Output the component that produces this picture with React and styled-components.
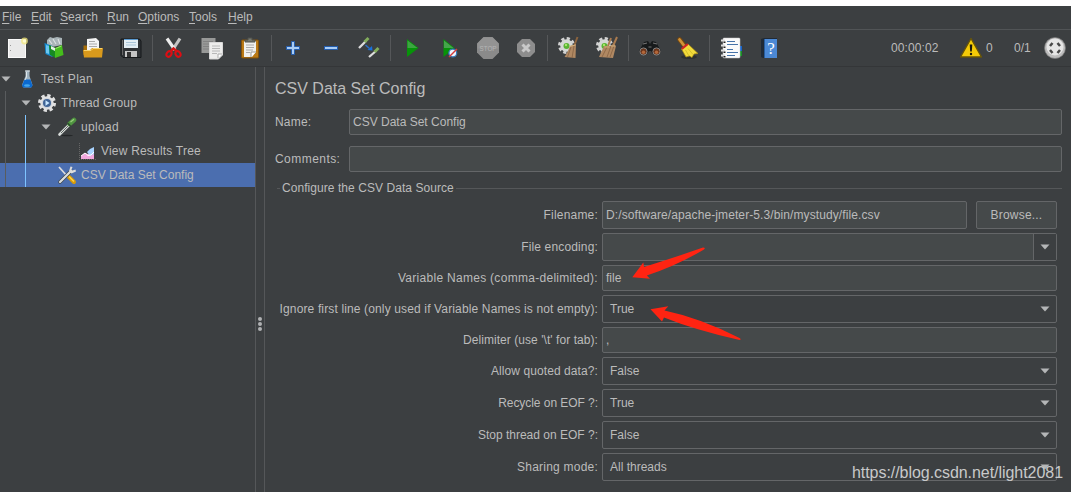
import styled, { createGlobalStyle } from "styled-components";

const GlobalStyle = createGlobalStyle`
    * {
        box-sizing: border-box;
    }

    body {
        margin: 0;
        background: #fff;
        color: #bbbbbb;
        font-family: "Liberation Sans", Arial, sans-serif;
        font-size: 12px;
        overflow: hidden;
    }
`;

const menus = [
    { label: 'File', width: 29 },
    { label: 'Edit', width: 29 },
    { label: 'Search', width: 47 },
    { label: 'Run', width: 31 },
    { label: 'Options', width: 51 },
    { label: 'Tools', width: 39 },
    { label: 'Help', width: 30 }
];

const Icon = ({ children, size = 24 }) => (
    <svg width={size} height={size} viewBox={`0 0 ${size} ${size}`} fill="none">{children}</svg>
);

const NewIcon = () => (
    <Icon>
        <rect x="3.5" y="3.5" width="17" height="18" fill="#e9e9e9" stroke="#fafafa" />
        <path d="M5.5 9v1M5.5 14v1" stroke="#999" />
        <circle cx="19.5" cy="5" r="3.4" fill="#f3e87c" opacity=".75" />
        <circle cx="19.5" cy="5" r="1.8" fill="#fffbd0" />
    </Icon>
);

const TemplatesIcon = () => (
    <Icon>
        <path d="M4 4l3-3 3 1 4-1 5 1v7L4 12z" fill="#a9b4b8" />
        <path d="M6 4l3 4M10 3l3 5M15 3l2 5" stroke="#dde2e3" strokeWidth="1.1" />
        <path d="M1.500 7l8 3v11l-7-3z" fill="#168bd0" />
        <path d="M3 9l3 1v8l-3-1z" fill="#6dc6ef" />
        <path d="M6 9l7 3v10l-6-3z" fill="#178a22" />
        <path d="M12 12l7-3 1.500 10-8.500 3z" fill="#45bd1c" />
        <path d="M12.500 12.500l6-2.500" stroke="#9be86e" />
        <path d="M8 10l4 2v3l-4-2z" fill="#e4efe4" />
    </Icon>
);

const OpenIcon = () => (
    <Icon>
        <path d="M2.500 19V9.500h5V14h13v5z" fill="#a66d08" />
        <path d="M6 3l9-1 3 3v10H6z" fill="#f4f4f4" />
        <path d="M8 5.500h6M8 8h8M8 10.500h8" stroke="#aaa" />
        <path d="M2 14h7l2-2h11l-1 9.500H3z" fill="#d99a1c" />
        <path d="M3 14.500h7l2-2h9" stroke="#f9d46c" />
    </Icon>
);

const SaveIcon = () => (
    <Icon>
        <path d="M2.500 3h18l1.500 2v16.500H4l-2-2V3z" fill="#303336" stroke="#15181a" />
        <rect x="5" y="3" width="14" height="9" fill="#e4eef4" />
        <path d="M5 3.500h14" stroke="#5c9bd0" />
        <path d="M7 6.500h10M7 9h10" stroke="#a9c5d9" />
        <rect x="6" y="15" width="12" height="6" fill="#c5c5c5" />
        <rect x="8" y="16" width="4" height="5" fill="#333" />
        <path d="M3.500 4v15" stroke="#666" />
    </Icon>
);

const CutIcon = () => (
    <Icon>
        <path d="M18 2.500L10.500 14" stroke="#c4c4c4" strokeWidth="3.200" />
        <path d="M5 2.500L13 14" stroke="#ededed" strokeWidth="3.200" />
        <path d="M9 15l2.500-2.500L14.500 15" stroke="#d31515" strokeWidth="2.500" />
        <ellipse cx="7" cy="18" rx="2.300" ry="3" transform="rotate(35 7 18)" stroke="#e00d13" strokeWidth="2" />
        <ellipse cx="16" cy="18" rx="2.300" ry="3" transform="rotate(-35 16 18)" stroke="#e00d13" strokeWidth="2" />
    </Icon>
);

const CopyIcon = () => (
    <Icon>
        <path d="M1.500 2h14v15h-14z" fill="#989998" />
        <path d="M3 5.500h10M3 8h6M3 10.500h6M3 13h6" stroke="#828282" />
        <path d="M9.500 6.500h13V19l-4 4h-9z" fill="#ededec" stroke="#d8d8d8" />
        <path d="M12 10h8M12 12.500h8M12 15h8M12 17.500h5" stroke="#b8b8b8" />
        <path d="M18 22v-4h4" fill="#fff" stroke="#aaa" />
    </Icon>
);

const PasteIcon = () => (
    <Icon>
        <rect x="3.500" y="4" width="17" height="18" rx="1" fill="#b97916" stroke="#80500b" />
        <path d="M6 5h12v11l-4 5H6z" fill="#f0f0ee" />
        <path d="M8 9h8M8 11.500h8M8 14h7M8 16.500h4" stroke="#aaa" />
        <path d="M7 6V4h3V2h4v2h3v2z" fill="#777970" stroke="#4f514b" />
        <path d="M13 21v-5h5" fill="#fff" stroke="#999" />
    </Icon>
);

const PlusIcon = () => (
    <Icon>
        <path d="M10.500 5.500h3v5h5v3h-5v5h-3v-5h-5v-3h5z" fill="#a9cdf6" stroke="#245dad" />
    </Icon>
);

const MinusIcon = () => (
    <Icon>
        <rect x="5.500" y="10.500" width="13" height="3" fill="#a9cdf6" stroke="#245dad" />
    </Icon>
);

const ToggleIcon = () => (
    <Icon>
        <path d="M2 12l7-7" stroke="#ddd" strokeWidth="2.300" />
        <path d="M7.500 6l4-4" stroke="#83ad5c" strokeWidth="3" />
        <path d="M12 21l7-6" stroke="#ddd" strokeWidth="2.300" />
        <path d="M17.500 16l4-4" stroke="#83ad5c" strokeWidth="3" />
        <path d="M8.500 9l4 3.500" stroke="#2d6fc4" strokeWidth="1.500" />
        <path d="M15.500 14.500l-5-.500 4.500-4z" fill="#1970dd" />
    </Icon>
);

const PlayIcon = () => (
    <Icon>
        <path d="M7 3l11.500 9L7 21z" fill="#079309" />
        <path d="M7.500 4.500l10 7.500h-10z" fill="#3da542" />
    </Icon>
);

const PlayNoPauseIcon = () => (
    <Icon>
        <path d="M5.500 3L16.500 12l-11 9z" fill="#079309" />
        <path d="M6 4.500L15.500 12H6z" fill="#45a54b" />
        <circle cx="14.800" cy="17" r="3.900" fill="#eef6ff" stroke="#3678b5" strokeWidth="1.300" />
        <path d="M11 21l8-8" stroke="#d43b39" strokeWidth="1.500" />
    </Icon>
);

const StopIcon = () => (
    <Icon>
        <path d="M7.500 1h9L23 7.500v9L16.500 23h-9L1 16.500v-9z" fill="#8a8a8a" />
        <path d="M7.500 1.500h9l6 6v5h-21v-5z" fill="#939393" />
        <text x="3.500" y="15" fontSize="8" textLength="17" lengthAdjust="spacingAndGlyphs" fill="#b5b5b5">STOP</text>
    </Icon>
);

const ShutdownIcon = () => (
    <Icon>
        <path d="M8 3h8l5 5v8l-5 5H8l-5-5V8z" fill="#8d8d8d" />
        <path d="M8.500 8.500l7 7M15.500 8.500l-7 7" stroke="#c9c9c9" strokeWidth="3" />
    </Icon>
);

const SmallGear = ({ children }) => (
    <Icon>
        <circle cx="9.500" cy="9.500" r="7.100" stroke="#d2d2d2" strokeWidth="2.800" strokeDasharray="3.200 2.376" />
        <circle cx="9.500" cy="9.500" r="6.300" fill="#d5d8d5" />
        <circle cx="9.500" cy="10" r="3" fill="#58b432" />
        <circle cx="9" cy="9" r="1.200" fill="#a8e66d" />
        {children}
    </Icon>
);

const ClearIcon = () => (
    <SmallGear>
        <path d="M20.500 1l-3 8" stroke="#8c643e" strokeWidth="2" />
        <path d="M13 10l6-2-.500 14-11-1 3-5z" fill="#b08862" />
        <path d="M14 11l-3.500 10M17 10l-2 12" stroke="#866242" strokeWidth=".8" />
        <path d="M12.500 10.500l6-1.500" stroke="#d2af7a" />
    </SmallGear>
);

const ClearAllIcon = () => (
    <SmallGear>
        <path d="M16 2l-3 8M22 1l-4 9" stroke="#aa7b4f" strokeWidth="2" />
        <path d="M9 10h6l4-2 2 2-3 12-14-1z" fill="#b08862" />
        <path d="M12 11L7 21M16 10l-4 11M19 10l-4 11" stroke="#866242" strokeWidth=".8" />
        <path d="M9.500 11h5M16 10h4" stroke="#d2af7a" />
    </SmallGear>
);

const SearchIcon = () => (
    <Icon>
        <path d="M1 15L6 6l4-1 2 3 2-3 4 1 5 9-2 4h-5l-3-4h-2l-3 4H3z" fill="#171a1b" />
        <path d="M5 8l4-1M19 8l-4-1M10.500 11h3" stroke="#777" />
        <circle cx="5.500" cy="15.500" r="3.600" fill="#6b351b" stroke="#858585" />
        <circle cx="18.500" cy="15.500" r="3.600" fill="#6b351b" stroke="#858585" />
        <circle cx="5.500" cy="16.200" r="1.700" fill="#b5683a" />
        <circle cx="18.500" cy="16.200" r="1.700" fill="#b5683a" />
    </Icon>
);

const BroomIcon = () => (
    <Icon>
        <ellipse cx="13" cy="21" rx="8" ry="2" fill="#2d3031" />
        <path d="M3.500 3.500l4 5" stroke="#76480f" strokeWidth="4.600" strokeLinecap="round" />
        <path d="M3.500 3.500l4.500 6" stroke="#d09339" strokeWidth="2.800" strokeLinecap="round" />
        <path d="M5.500 13l6.500-5 10 9.500-4 .500-2 3.500-2.500-1.500-3.500 1z" fill="#f2db3b" stroke="#a88b12" strokeWidth=".7" />
        <path d="M9.500 14l3.500 6M12 12.500l5 6" stroke="#cdb728" strokeWidth=".8" />
        <path d="M5.800 12.800l6-4.800" stroke="#cf2424" strokeWidth="2.200" />
    </Icon>
);

const FunctionIcon = () => (
    <Icon>
        <path d="M20 10h3v5h-3z" fill="#1764ca" />
        <path d="M20 15h3v5h-3z" fill="#189026" />
        <rect x="4" y="2" width="17" height="20" rx="1" fill="#fafafa" stroke="#c8c8c8" strokeWidth=".5" />
        <path d="M8 5.500h8M8 8.500h11M8 13.500h6M8 16.500h11M8 19.500h8" stroke="#4773a8" />
        <path d="M2 4.500h4M2 9.500h4M2 14.500h4M2 19.500h4" stroke="#ddd" strokeWidth="1.800" />
        <path d="M5.500 5.500v1.500M5.500 10.500v1.500M5.500 15.500v1.500M5.500 20v1.500" stroke="#222" strokeWidth="2" />
    </Icon>
);

const HelpIcon = () => (
    <Icon>
        <path d="M4 3l3-1h13v20H6l-2-1z" fill="#202a36" />
        <path d="M7 3h13v19H7z" fill="#4c89d5" />
        <path d="M7.500 3v19" stroke="#285d9d" />
        <text x="14" y="18" textAnchor="middle" fontFamily="Liberation Serif" fontSize="17" fill="#fff">?</text>
    </Icon>
);

const WarningIcon = () => (
    <Icon>
        <path d="M12 2.500L22.500 21h-21z" fill="#f5cb08" stroke="#66540a" strokeWidth="1.400" strokeLinejoin="round" />
        <path d="M10.700 8.500h2.600l-.500 7h-1.600z" fill="#18180f" />
        <circle cx="12" cy="18" r="1.200" fill="#18180f" />
    </Icon>
);

const StatusIcon = () => (
    <Icon>
        <circle cx="12" cy="12" r="10.500" fill="#bdbdbd" stroke="#777" strokeWidth=".7" />
        <circle cx="12" cy="11" r="8.500" fill="#e6e6e6" />
        <path d="M7 10l2.500-3M14.500 7l2.500 3M17 14l-2.500 3M9.500 17L7 14" stroke="#484848" strokeWidth="2.500" />
    </Icon>
);

const PlanIcon = () => (
    <Icon size={20}>
        <path d="M8.500 1.500h4V7l3 9-1.500 2.500H6.500L5 16l3.500-9z" fill="#9fb1bd" />
        <path d="M7.500 10.500h6l2 6-1 2H6l-1-2z" fill="#0b69cf" />
        <path d="M9.500 3v5l-1.500 3M8 2h5" stroke="#e6ecef" strokeWidth=".9" />
        <ellipse cx="10" cy="16.500" rx="3" ry="1.200" fill="#42a8ef" />
    </Icon>
);

const GearIcon = () => (
    <Icon size={20}>
        <circle cx="10" cy="10" r="7.500" stroke="#e0e0e0" strokeWidth="3" strokeDasharray="3.300 2.590" />
        <circle cx="10" cy="10" r="6" fill="#d1d5dc" stroke="#e4e4e4" strokeWidth="1.500" />
        <circle cx="10" cy="10" r="4" fill="#3f6395" />
        <path d="M8.500 7.300l4 2.700-4 2.700z" fill="#c9e7ff" />
    </Icon>
);

const DropperIcon = () => (
    <Icon size={20}>
        <ellipse cx="10" cy="18.500" rx="6" ry=".700" fill="#242728" />
        <path d="M2.500 17.500L12 8" stroke="#d9dddb" strokeWidth="2.600" strokeLinecap="round" />
        <path d="M4 16L12 8" stroke="#626765" />
        <path d="M12.500 7l4.500-4" stroke="#4f9440" strokeWidth="4.600" strokeLinecap="round" />
        <path d="M10.500 6l3.500 3.500" stroke="#2d4a30" strokeWidth="1.300" />
        <path d="M13.500 5l3.500-2.800" stroke="#98cd7b" strokeWidth="1.300" />
    </Icon>
);

const ResultsIcon = () => (
    <Icon size={20}>
        <path d="M2.500 2v16M2 18.500h17" stroke="#666" strokeDasharray="1 1" />
        <path d="M4 15l4-3 3 1 6-2v7H4z" fill="#f1a8de" />
        <path d="M10 11l3-3 4-2v7l-4 2z" fill="#a8d3ff" />
        <path d="M4 15l4-3 3 2.500 3-.500 3-3" stroke="#fff" />
    </Icon>
);

const ToolsIcon = () => (
    <Icon size={20}>
        <path d="M2 2l8 9" stroke="#ddd" strokeWidth="1.700" />
        <path d="M12 12l5 5" stroke="#d79b08" strokeWidth="4" strokeLinecap="round" />
        <path d="M12 11.500l5 5" stroke="#ffd34a" strokeWidth="1.500" />
        <path d="M3 17L14 6" stroke="#3d4246" strokeWidth="3.600" strokeLinecap="round" />
        <path d="M3 17L14 6" stroke="#dadddd" strokeWidth="2.300" strokeLinecap="round" />
        <path d="M13.500 1.500l-1.500 4.500 2.500 2.500 4.500-2-.500-2-3 1-1-1 1-2.500z" fill="#ddd" />
    </Icon>
);

const toolGroups = [
    [NewIcon, TemplatesIcon, OpenIcon, SaveIcon],
    [CutIcon, CopyIcon, PasteIcon],
    [PlusIcon, MinusIcon, ToggleIcon],
    [PlayIcon, PlayNoPauseIcon, StopIcon, ShutdownIcon],
    [ClearIcon, ClearAllIcon],
    [SearchIcon, BroomIcon],
    [FunctionIcon, HelpIcon]
];

const treeNodes = [
    { label: 'Test Plan', depth: 0, icon: PlanIcon, open: true, track: 0.3 },
    { label: 'Thread Group', depth: 1, icon: GearIcon, open: true, track: 0.1 },
    { label: 'upload', depth: 2, icon: DropperIcon, open: true, track: 0.35 },
    { label: 'View Results Tree', depth: 3, icon: ResultsIcon, track: 0.2 },
    { label: 'CSV Data Set Config', depth: 2, icon: ToolsIcon, selected: true }
];

const fields = [
    { label: 'Filename:', type: 'file', value: 'D:/software/apache-jmeter-5.3/bin/mystudy/file.csv', track: 0.2 },
    { label: 'File encoding:', type: 'editable', value: '', track: 0.15 },
    { label: 'Variable Names (comma-delimited):', type: 'text', value: 'file', track: 0.29 },
    { label: 'Ignore first line (only used if Variable Names is not empty):', type: 'select', value: 'True', track: 0.14 },
    { label: "Delimiter (use '\\t' for tab):", type: 'text', value: ',', track: 0.06 },
    { label: 'Allow quoted data?:', type: 'select', value: 'False', track: 0.09 },
    { label: 'Recycle on EOF ?:', type: 'select', value: 'True', track: -0.05 },
    { label: 'Stop thread on EOF ?:', type: 'select', value: 'False' },
    { label: 'Sharing mode:', type: 'select', value: 'All threads', track: 0.22 }
];

const Triangle = () => (
    <svg width="10" height="6" viewBox="0 0 10 6"><path d="M.5.500h9L5 5.500z" fill="#b4b6b7" /></svg>
);

const TreeNode = ({ node }) => {
    const NodeIcon = node.icon;

    return (
        <TreeRow $selected={node.selected}>
            {Array.from({ length: node.depth }, (_, i) => <Guide key={i} $active={i === 1} />)}
            <Toggle>{node.open && <Triangle />}</Toggle>
            <NodeIcon />
            <NodeLabel $track={node.track}>{node.label}</NodeLabel>
        </TreeRow>
    );
};

const FieldRow = ({ field }) => {
    const isText = field.type === 'text';

    return (
        <FormRow $height={isText ? 26 : 28}>
            <FormLabel $track={field.track}>{field.label}</FormLabel>
            {field.type === 'select' ? (
                <Select>{field.value}<Triangle /></Select>
            ) : (
                <Input>
                    <Value $track={field.type === 'file' ? 0.1 : 0}>{field.value}</Value>
                    {field.type === 'editable' && <DropButton><Triangle /></DropButton>}
                </Input>
            )}
            {field.type === 'file' && <Browse>Browse...</Browse>}
        </FormRow>
    );
};

const App = () => (
    <Window>
        <GlobalStyle />
        <MenuBar>
            {menus.map(({ label, width }) => (
                <MenuItem key={label} $width={width}><u>{label[0]}</u>{label.slice(1)}</MenuItem>
            ))}
        </MenuBar>
        <Toolbar>
            {toolGroups.map((group, i) => (
                <ToolGroup key={i}>
                    {group.map((ToolIcon, j) => <ToolIcon key={j} />)}
                </ToolGroup>
            ))}
            <Status>
                <Timer>00:00:02</Timer>
                <WarningIcon />
                <ErrorCount>0</ErrorCount>
                <ThreadCount>0/1</ThreadCount>
                <StatusIcon />
            </Status>
        </Toolbar>
        <Main>
            <Tree>
                {treeNodes.map((node) => <TreeNode key={node.label} node={node} />)}
            </Tree>
            <Splitter><Dot /><Dot /><Dot /></Splitter>
            <Panel>
                <Title>CSV Data Set Config</Title>
                <InfoRow>
                    <InfoLabel $track={0.2}>Name:</InfoLabel>
                    <Input><Value>CSV Data Set Config</Value></Input>
                </InfoRow>
                <InfoRow>
                    <InfoLabel $track={0.45}>Comments:</InfoLabel>
                    <Input />
                </InfoRow>
                <GroupHeader>Configure the CSV Data Source</GroupHeader>
                <Form>
                    {fields.map((field) => <FieldRow key={field.label} field={field} />)}
                </Form>
            </Panel>
        </Main>
        <Arrows width="1071" height="492" viewBox="0 0 1071 492">
            <path d="M632.300 277.300L643.300 262.500L644 267Q676 257 703 247.600Q706 247.600 704 249.500Q676 266 646.800 275.500L650 278.700Z" />
            <path d="M650.500 309.300L668.300 306.200L664.500 310.600Q700 318 740 338.300Q741.500 339.800 739.500 340Q695 330 664 317.500L662 321.500Z" />
        </Arrows>
        <Watermark>https://blog.csdn.net/light2081</Watermark>
    </Window>
);

export default App;

const Window = styled.div`
    position: relative;
    display: flex;
    flex-direction: column;
    width: 1071px;
    height: 492px;
    border-top: 6px solid #fff;
    background: #3c3f41;
    overflow: hidden;
    white-space: nowrap;
`;

const MenuBar = styled.div`
    display: flex;
    align-items: center;
    height: 24px;
    padding: 0 0 1px 2px;
    border-bottom: 1px solid #515456;
`;

const MenuItem = styled.div`
    width: ${({ $width }) => $width}px;

    u {
        text-underline-offset: 2px;
        text-decoration-thickness: 1px;
    }
`;

const Toolbar = styled.div`
    display: flex;
    align-items: center;
    height: 37px;
    padding-left: 5px;
    border-bottom: 1px solid #343638;
`;

const ToolGroup = styled.div`
    display: flex;
    align-items: center;
    gap: 14px;
    height: 26px;

    & + & {
        margin-left: 9px;
        padding-left: 9px;
        border-left: 1px solid #555759;
    }
`;

const Status = styled.div`
    display: flex;
    align-items: center;
    margin-left: auto;
    padding-right: 4px;
`;

const Timer = styled.div`
    width: 68px;
    letter-spacing: .1px;
`;

const ErrorCount = styled.div`
    width: 31px;
    padding-left: 3px;
`;

const ThreadCount = styled.div`
    width: 29px;
`;

const Main = styled.div`
    display: flex;
    flex: 1;
    min-height: 0;
`;

const Tree = styled.div`
    width: 255px;
`;

const TreeRow = styled.div`
    display: flex;
    align-items: center;
    height: 24px;
    background: ${({ $selected }) => ($selected ? '#4b6eaf' : 'transparent')};
`;

const Guide = styled.div`
    width: 20px;
    height: 100%;

    &::before {
        content: "";
        display: block;
        width: 1px;
        height: 100%;
        margin-left: 5px;
        background: ${({ $active }) => ($active ? '#7fc4ff' : '#595c5e')};
    }
`;

const Toggle = styled.div`
    display: flex;
    width: 17px;
    padding-left: 1px;
`;

const NodeLabel = styled.div`
    padding-left: 4px;
    letter-spacing: ${({ $track = 0 }) => $track}px;
`;

const Splitter = styled.div`
    display: flex;
    flex-direction: column;
    align-items: center;
    gap: 1px;
    width: 10px;
    padding-top: 250px;
    border: solid #555759;
    border-width: 0 1px;
`;

const Dot = styled.div`
    width: 4px;
    height: 4px;
    border-radius: 50%;
    background: #b0b2b3;
`;

const Panel = styled.div`
    flex: 1;
    padding: 11px 9px 0 10px;
`;

const Title = styled.div`
    height: 31px;
    font-size: 16px;
    line-height: 22px;
`;

const InfoRow = styled.div`
    display: flex;
    align-items: center;
    height: 26px;
    margin-bottom: 11px;
`;

const InfoLabel = styled.div`
    width: 74px;
    letter-spacing: ${({ $track = 0 }) => $track}px;
`;

const Input = styled.div`
    display: flex;
    align-items: center;
    flex: 1;
    height: 100%;
    border: 1px solid #646668;
    border-radius: 2px;
    background: #45494a;
`;

const Value = styled.div`
    flex: 1;
    padding-left: 3px;
    letter-spacing: ${({ $track = 0 }) => $track}px;
`;

const DropButton = styled.div`
    display: flex;
    align-items: center;
    width: 23px;
    height: 100%;
    padding-left: 6px;
    border-left: 1px solid #646668;
    background: #3c3f41;
`;

const Select = styled.div`
    display: flex;
    align-items: center;
    justify-content: space-between;
    flex: 1;
    height: 100%;
    padding: 0 6px 0 7px;
    border: 1px solid #646668;
    border-radius: 2px;
`;

const GroupHeader = styled.div`
    display: flex;
    align-items: center;
    gap: 2px;
    height: 10px;
    margin-bottom: 8px;
    padding-left: 2px;
    letter-spacing: .06px;

    &::before,
    &::after {
        content: "";
        width: 3px;
        height: 1px;
        background: #555759;
    }

    &::after {
        flex: 1;
    }
`;

const Form = styled.div`
    display: flex;
    flex-direction: column;
    gap: 4px;
    padding-right: 5px;
`;

const FormRow = styled.div`
    display: flex;
    align-items: center;
    height: ${({ $height }) => $height}px;
`;

const FormLabel = styled.div`
    width: 323px;
    margin-right: 4px;
    text-align: right;
    letter-spacing: ${({ $track = 0 }) => $track}px;
`;

const Browse = styled.button`
    width: 81px;
    height: 28px;
    margin-left: 9px;
    padding: 0;
    border: 1px solid #646668;
    border-radius: 2px;
    background: #45494a;
    color: inherit;
    font: inherit;
    letter-spacing: .2px;
`;

const Arrows = styled.svg`
    position: absolute;
    top: -6px;
    left: 0;
    fill: #ff2412;
`;

const Watermark = styled.div`
    position: absolute;
    right: 8px;
    bottom: 9px;
    color: #c8c9ca;
    font-size: 16px;
    line-height: 20px;
    letter-spacing: -.05px;
`;
